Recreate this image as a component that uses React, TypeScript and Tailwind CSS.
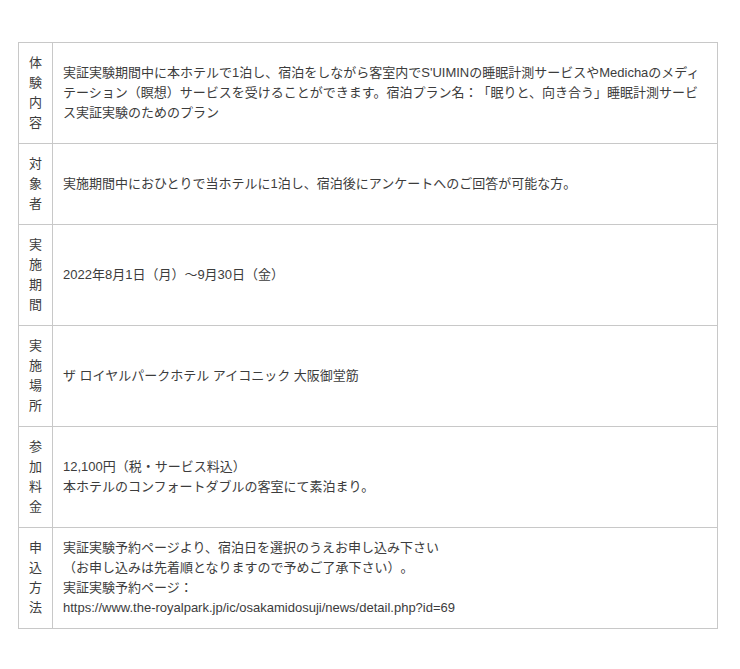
const rows: { label: string; lines: string[] }[] = [
  {
    label: "体験内容",
    lines: [
      "実証実験期間中に本ホテルで1泊し、宿泊をしながら客室内でS'UIMINの睡眠計測サービスやMedichaのメディテーション（瞑想）サービスを受けることができます。宿泊プラン名：「眠りと、向き合う」睡眠計測サービス実証実験のためのプラン",
    ],
  },
  {
    label: "対象者",
    lines: ["実施期間中におひとりで当ホテルに1泊し、宿泊後にアンケートへのご回答が可能な方。"],
  },
  { label: "実施期間", lines: ["2022年8月1日（月）～9月30日（金）"] },
  { label: "実施場所", lines: ["ザ ロイヤルパークホテル アイコニック 大阪御堂筋"] },
  {
    label: "参加料金",
    lines: ["12,100円（税・サービス料込）", "本ホテルのコンフォートダブルの客室にて素泊まり。"],
  },
  {
    label: "申込方法",
    lines: [
      "実証実験予約ページより、宿泊日を選択のうえお申し込み下さい",
      "（お申し込みは先着順となりますので予めご了承下さい）。",
      "実証実験予約ページ：",
      "https://www.the-royalpark.jp/ic/osakamidosuji/news/detail.php?id=69",
    ],
  },
];

export default function App() {
  return (
    <div
      className="min-h-[669px] bg-white pt-[42px] pl-[18px] text-[#3c3c3c] text-[13px] leading-[20px] [text-spacing-trim:space-all]"
      style={{ fontFamily: '"Liberation Sans", "Noto Sans CJK JP", sans-serif' }}
    >
      <table className="w-[700px] border-collapse">
        <tbody>
          {rows.map((r) => (
            <tr key={r.label}>
              <td className="w-[34px] border border-[#c8c8c8] py-[10px] text-center align-middle">
                {r.label.split("").map((c, i) => (
                  <div key={i}>{c}</div>
                ))}
              </td>
              <td className="border border-[#c8c8c8] py-[10px] pl-[10px] pr-[12px] align-middle">
                {r.lines.map((l, i) => (
                  <div key={i}>{l}</div>
                ))}
              </td>
            </tr>
          ))}
        </tbody>
      </table>
    </div>
  );
}
